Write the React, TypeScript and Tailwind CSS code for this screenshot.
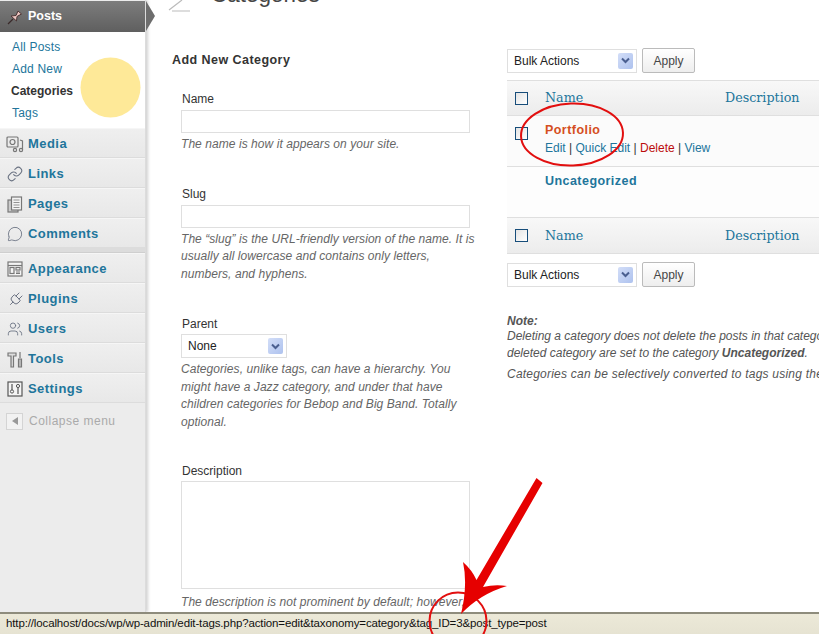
import React from 'react';
import { Link, MessageCircle, Plug, Users } from 'lucide-react';

const SANS = "font-['Liberation_Sans',Arial,sans-serif]";

const BoxIcon: React.FC<{ kind: string }> = ({ kind }) => {
  const s = { fill: 'none', stroke: '#777', strokeWidth: 1.2 };
  if (kind === 'pin') {
    return (
      <svg width="16" height="16" viewBox="0 0 16 16">
        <path d="M1 15 L6 10" stroke="#3a2a2a" strokeWidth="1.3" />
        <path d="M4 7 L9 6.5 L11 2 L14.5 5 L10 7.5 L9.5 12 Z" fill="#eec6c2" stroke="#4a3434" strokeWidth="1" />
      </svg>
    );
  }
  if (kind === 'media') {
    return (
      <svg width="18" height="18" viewBox="0 0 18 18">
        <rect x="1" y="2" width="11" height="10" rx="1" {...s} />
        <circle cx="6.5" cy="7" r="2.5" {...s} />
        <circle cx="9" cy="15" r="1.6" {...s} />
        <circle cx="15" cy="15" r="1.6" {...s} />
        <path d="M16.5 15 V6 L14 5" {...s} />
      </svg>
    );
  }
  if (kind === 'pages') {
    return (
      <svg width="16" height="17" viewBox="0 0 16 17">
        <rect x="1" y="4" width="10" height="12" {...s} fill="#ccc" />
        <rect x="4.5" y="1" width="10" height="13" {...s} fill="#f4f4f4" />
        <path d="M6.5 4 H12.5 M6.5 6.5 H12.5 M6.5 9 H12.5 M6.5 11.5 H12.5" stroke="#888" strokeWidth="0.9" />
      </svg>
    );
  }
  if (kind === 'appearance') {
    return (
      <svg width="16" height="16" viewBox="0 0 16 16">
        <rect x="1" y="1" width="14" height="14" {...s} fill="#f4f4f4" />
        <path d="M1 4.5 H15" {...s} />
        <rect x="3" y="6.5" width="4" height="6" {...s} />
        <rect x="9" y="6.5" width="4" height="2.5" {...s} />
        <path d="M9 11 H13 M9 12.5 H13" {...s} />
      </svg>
    );
  }
  if (kind === 'tools') {
    return (
      <svg width="17" height="17" viewBox="0 0 17 17">
        <path d="M1 2 H9 V5 H6.5 V16 H4 V5 H1 Z" {...s} fill="#ddd" />
        <path d="M13 1 V7 M11.5 8 H14.5 V16 H11.5 Z" {...s} fill="#bbb" />
      </svg>
    );
  }
  if (kind === 'settings') {
    return (
      <svg width="16" height="16" viewBox="0 0 16 16">
        <rect x="1" y="1" width="14" height="14" stroke="#555" strokeWidth="1.2" fill="#f4f4f4" />
        <circle cx="5" cy="10.5" r="1.6" stroke="#555" fill="none" />
        <path d="M5 3 V9 M11 7 V13" stroke="#555" strokeWidth="1.2" />
        <circle cx="11" cy="5" r="1.6" stroke="#555" fill="none" />
      </svg>
    );
  }
  return null;
};

const MENU_ONE = [
  { label: 'Media', icon: <BoxIcon kind="media" /> },
  { label: 'Links', icon: <Link size={16} strokeWidth={1.6} className="text-gray-500" /> },
  { label: 'Pages', icon: <BoxIcon kind="pages" /> },
  { label: 'Comments', icon: <MessageCircle size={16} strokeWidth={1.3} className="text-gray-500" /> },
];

const MENU_TWO = [
  { label: 'Appearance', icon: <BoxIcon kind="appearance" /> },
  { label: 'Plugins', icon: <Plug size={17} strokeWidth={1.3} className="text-gray-500 rotate-45" /> },
  { label: 'Users', icon: <Users size={16} strokeWidth={1.3} className="text-gray-500" /> },
  { label: 'Tools', icon: <BoxIcon kind="tools" /> },
  { label: 'Settings', icon: <BoxIcon kind="settings" /> },
];

const MenuRow: React.FC<{ label: string; icon: React.ReactNode }> = ({ label, icon }) => (
  <div className="h-[30px] pt-[2px] flex items-center border-t border-[#f6f6f6] border-b-[#dcdcdc] border-b bg-gradient-to-b from-[#efefef] to-[#e8e8e8]">
    <div className="w-[28px] flex justify-center pl-[2px]">{icon}</div>
    <span className="text-[13px] font-bold tracking-[0.45px] text-[#21759b]">{label}</span>
  </div>
);

const Sidebar: React.FC = () => (
  <div className="w-[146px] shrink-0 h-full bg-[#ececec] border-r border-[#dcdcdc] shadow-[2px_0_3px_rgba(0,0,0,0.18)] relative z-10">
    <div className="relative h-[31px] mt-[1px] flex items-center bg-gradient-to-b from-[#7d7d7d] to-[#5f5f5f] text-white">
      <div className="w-[28px] flex justify-center pl-[2px]"><BoxIcon kind="pin" /></div>
      <span className="text-[12.5px] font-bold">Posts</span>
      <div className="absolute left-[146px] top-0 w-0 h-0 border-y-[15.5px] border-y-transparent border-l-[9px] border-l-[#6d6d6d]" />
    </div>
    <div className="h-[96px] bg-white pt-[4px] pl-[12px] text-[12px] leading-[22px] text-[#21759b] tracking-[0.2px]">
      <div>All Posts</div>
      <div>Add New</div>
      <div className="font-bold text-[#333] tracking-normal -ml-[1px]">Categories</div>
      <div>Tags</div>
    </div>
    {MENU_ONE.map((m) => <MenuRow key={m.label} {...m} />)}
    <div className="h-[5px] bg-[#dcdcdc] border-b border-[#cfcfcf]" />
    {MENU_TWO.map((m) => <MenuRow key={m.label} {...m} />)}
    <div className="h-[30px] mt-[3px] flex items-center pl-[6px] text-[12px] tracking-[0.5px] text-[#aaa]">
      <div className="w-[17px] h-[17px] bg-[#f2f2f2] border border-[#d4d4d4] flex items-center justify-center mr-[6px]">
        <div className="w-0 h-0 border-y-[4px] border-y-transparent border-r-[6px] border-r-[#999]" />
      </div>
      Collapse menu
    </div>
  </div>
);

const Dropdown: React.FC<{ label: string; width: string }> = ({ label, width }) => (
  <div className={`${width} h-[24px] border border-[#dfdfdf] bg-white flex items-center justify-between pl-[6px] pr-[3px] text-[12px] text-[#222]`}>
    {label}
    <div className="w-[15px] h-[16px] rounded-[2px] bg-gradient-to-br from-[#d3def8] to-[#aec2ee] flex items-center justify-center">
      <svg width="9" height="7" viewBox="0 0 9 7"><path d="M1 1.5 L4.5 5 L8 1.5" fill="none" stroke="#4a5f90" strokeWidth="2" /></svg>
    </div>
  </div>
);

const BulkBar: React.FC = () => (
  <div className="flex items-center gap-[5px]">
    <Dropdown label="Bulk Actions" width="w-[130px]" />
    <div className="w-[53px] h-[25px] border border-[#bbb] bg-gradient-to-b from-white to-[#eee] rounded-[2px] flex items-center justify-center text-[12px] text-[#464646]">Apply</div>
  </div>
);

const Check: React.FC = () => (
  <div className="w-[13px] h-[13px] border border-[#174d7a] bg-gradient-to-br from-[#e4e4e4] to-white" />
);

const HeadRow: React.FC<{ border: string }> = ({ border }) => (
  <div className={`h-[35px] ${border} border-[#dfdfdf] bg-gradient-to-b from-[#f8f8f8] to-[#ececec] flex items-center font-['DejaVu_Serif',serif] text-[12.7px] text-[#21759b]`}>
    <div className="w-[38px] pl-[8px]"><Check /></div>
    <div className="w-[180px]">Name</div>
    <div>Description</div>
  </div>
);

const Help: React.FC<{ children: React.ReactNode; mt?: string }> = ({ children, mt = 'mt-[3px]' }) => (
  <p className={`${mt} text-[12px] leading-[17.5px] italic text-[#666] tracking-[0.06px]`}>{children}</p>
);

const AddForm: React.FC = () => (
  <div className="w-[308px] shrink-0 ml-[26px] pt-[52px]">
    <h3 className="text-[12.5px] font-bold tracking-[0.45px] text-[#333] leading-[16px]">Add New Category</h3>
    <div className="pl-[9px] text-[12px] text-[#333]">
      <label className="block mt-[23px] pl-[1px] leading-[16px]">Name</label>
      <div className="mt-[3px] h-[23px] w-[289px] border border-[#dfdfdf] bg-white" />
      <Help>The name is how it appears on your site.</Help>
      <label className="block mt-[32px] pl-[1px] leading-[16px]">Slug</label>
      <div className="mt-[3px] h-[23px] w-[289px] border border-[#dfdfdf] bg-white" />
      <Help>The “slug” is the URL-friendly version of the name. It is usually all lowercase and contains only letters, numbers, and hyphens.</Help>
      <label className="block mt-[33px] pl-[1px] leading-[16px]">Parent</label>
      <div className="mt-[2px]"><Dropdown label="None" width="w-[106px]" /></div>
      <Help>Categories, unlike tags, can have a hierarchy. You might have a Jazz category, and under that have children categories for Bebop and Big Band. Totally optional.</Help>
      <label className="block mt-[32px] pl-[1px] leading-[16px]">Description</label>
      <div className="mt-[2px] h-[108px] w-[289px] border border-[#dfdfdf] bg-white" />
      <Help mt="mt-[5px]">The description is not prominent by default; however,</Help>
    </div>
  </div>
);

const CategoryTable: React.FC = () => (
  <div className="mt-[7px] -ml-[1px] border-y border-l border-[#dfdfdf] w-[340px]">
    <HeadRow border="border-b" />
    <div className="h-[51px] border-b border-[#dfdfdf] bg-[#fbfbfb] flex">
      <div className="w-[38px] pl-[8px] pt-[11px]"><Check /></div>
      <div className="pt-[6px]">
        <div className="text-[12.5px] font-bold tracking-[0.45px] text-[#d54e21] leading-[16px]">Portfolio</div>
        <div className="mt-[2px] text-[12px] leading-[16px] text-[#21759b]">
          Edit <span className="text-[#333]">|</span> Quick Edit <span className="text-[#333]">|</span> <span className="text-[#bc0b0b]">Delete</span> <span className="text-[#333]">|</span> View
        </div>
      </div>
    </div>
    <div className="h-[51px] border-b border-[#dfdfdf] bg-[#fdfdfd] pl-[38px] pt-[6px] text-[12.5px] font-bold tracking-[0.45px] text-[#21759b] leading-[16px]">Uncategorized</div>
    <HeadRow border="" />
  </div>
);

const RightColumn: React.FC = () => (
  <div className="ml-[27px] pt-[48px] flex-1 min-w-0 overflow-hidden">
    <BulkBar />
    <CategoryTable />
    <div className="mt-[8px]"><BulkBar /></div>
    <div className="mt-[26px] text-[12px] leading-[17px] italic text-[#555] whitespace-nowrap">
      <div className="font-bold">Note:</div>
      <div className="mt-[-2px]">Deleting a category does not delete the posts in that category. Instead, posts that were only</div>
      <div>deleted category are set to the category <b>Uncategorized</b>.</div>
      <div className="mt-[4px] tracking-[0.22px]">Categories can be selectively converted to tags using the category to tag converter.</div>
    </div>
  </div>
);

const Overlay: React.FC = () => (
  <svg className="absolute inset-0 z-20 pointer-events-none" width="819" height="634" viewBox="0 0 819 634">
    <circle cx="110.5" cy="87.5" r="30" fill="#fee998" />
    <ellipse cx="572" cy="134.5" rx="51" ry="31" fill="none" stroke="#e20f0f" strokeWidth="2" transform="rotate(-2 572 134.5)" />
    <circle cx="458" cy="621" r="28.5" fill="none" stroke="#e20f0f" strokeWidth="2" />
    <path d="M536.5 478 L542.5 483 L483 587 Q495 584 507 586 Q480 594 461 614 Q468 585 463 562 Q472 570 476.5 580 Z" fill="#e60000" />
  </svg>
);

const App: React.FC = () => (
  <div className={`relative w-[819px] h-[634px] overflow-hidden bg-white ${SANS}`}>
    <div className="flex h-[612px] overflow-hidden">
      <Sidebar />
      <div className="flex-1 min-w-0 relative flex">
        <AddForm />
        <RightColumn />
        <div className="absolute left-[65px] top-[-15px] text-[22.5px] text-[#464646] leading-[20px]">Categories</div>
        <svg className="absolute left-[22px] top-0" width="24" height="12" viewBox="0 0 24 12">
          <path d="M1 10 L14 0 M4 11 H22" stroke="#bbb" strokeWidth="1.2" fill="none" />
        </svg>
      </div>
    </div>
    <div className="h-[22px] bg-gradient-to-b from-[#ece9d8] to-[#e6e3d2] border-t-2 border-[#8e8c7c] flex items-center pl-[6px] text-[11.5px] tracking-[-0.13px] text-[#111] whitespace-nowrap">
      http://localhost/docs/wp/wp-admin/edit-tags.php?action=edit&amp;taxonomy=category&amp;tag_ID=3&amp;post_type=post
    </div>
    <Overlay />
  </div>
);

export default App;
